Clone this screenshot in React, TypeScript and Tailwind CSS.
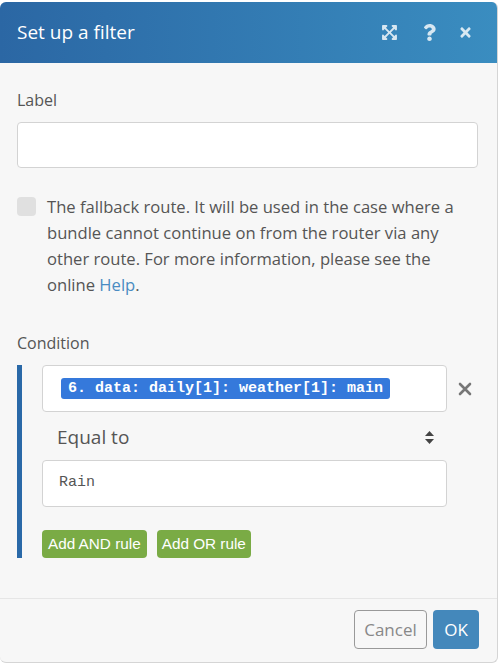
import { FaExpandArrowsAlt, FaQuestion, FaTimes } from "react-icons/fa";

const mono = { fontFamily: '"Liberation Mono", "Courier New", monospace' };

export default function App() {
  return (
    <div className="min-h-screen bg-white pt-[2px]" style={{ fontFamily: '"Open Sans", "Noto Sans", sans-serif' }}>
      <div className="w-[498px] h-[661px] flex flex-col rounded-[6px] overflow-hidden bg-[#f7f7f7] border-r border-b border-[#d5d5d5]">
        {/* header */}
        <div className="h-[61px] shrink-0 flex items-center justify-between pl-[17px] pr-[25px] bg-gradient-to-r from-[#2b67a4] to-[#3a8dc0]">
          <h1 className="text-[19px] text-white">Set up a filter</h1>
          <div className="flex items-center text-white/80">
            <FaExpandArrowsAlt className="w-[17px] h-[17px]" />
            <FaQuestion className="ml-[25px] w-[13px] h-[17px]" />
            <FaTimes className="ml-[23px] w-[13px] h-[15px]" />
          </div>
        </div>

        {/* body */}
        <div className="flex-1 px-[17px] pt-[25px] text-[#555]">
          <div className="text-[16px] leading-[24px]">Label</div>
          <div className="mt-[10px] mr-[2px] h-[46px] bg-white border border-[#d3d3d3] rounded-[4px]" />

          <div className="mt-[26px] flex gap-[11px] pr-[8px]">
            <div className="mt-[3px] w-[19px] h-[19px] shrink-0 rounded-[4px] bg-[#e0e0e0]" />
            <p className="text-[16.6px] leading-[26px] text-[#555]">
              The fallback route. It will be used in the case where a bundle cannot continue on from the router via any
              other route. For more information, please see the online <span className="text-[#4a8cc2]">Help</span>.
            </p>
          </div>

          <div className="mt-[33px] text-[16px] leading-[24px]">Condition</div>

          <div className="mt-[10px] border-l-[5px] border-[#2a69a8] pl-[20px]">
            <div className="flex items-center">
              <div className="w-[405px] h-[47px] bg-white border border-[#d3d3d3] rounded-[4px] flex items-center pl-[18px]">
                <span className="bg-[#3579db] text-white font-bold text-[15px] leading-[21px] px-[7px] rounded-[3px]" style={mono}>
                  6. data: daily[1]: weather[1]: main
                </span>
              </div>
              <svg className="ml-[11px]" width="14" height="14" viewBox="0 0 14 14" stroke="#777" strokeWidth="2.6" strokeLinecap="round">
                <path d="M2 2 L12 12 M12 2 L2 12" />
              </svg>
            </div>

            <div className="w-[405px] h-[48px] flex items-center justify-between pl-[15px] pr-[13px] pt-[3px]">
              <span className="text-[19px] text-[#555]">Equal to</span>
              <svg width="9" height="13" viewBox="0 0 9 13" fill="#444">
                <path d="M4.5 0 L9 5 H0 Z" />
                <path d="M0 8 H9 L4.5 13 Z" />
              </svg>
            </div>

            <div className="w-[405px] h-[47px] bg-white border border-[#d3d3d3] rounded-[4px] pl-[16px] pt-[11px] text-[15px] text-[#555]" style={mono}>
              Rain
            </div>

            <div className="mt-[23px] flex gap-[10px]" style={{ fontFamily: '"Liberation Sans", Arial, sans-serif' }}>
              <button className="h-[28px] px-[6px] rounded-[4px] bg-[#7aab45] text-white text-[15.3px]">Add AND rule</button>
              <button className="h-[28px] px-[5px] rounded-[4px] bg-[#7aab45] text-white text-[15.3px]">Add OR rule</button>
            </div>
          </div>
        </div>

        {/* footer */}
        <div className="h-[64px] shrink-0 border-t border-[#e6e6e6] flex items-center justify-end gap-[6px] pr-[18px] pb-[2px]">
          <button className="h-[39px] w-[73px] rounded-[4px] border border-[#999] text-[#888] text-[17px]">Cancel</button>
          <button className="h-[39px] w-[46px] rounded-[4px] bg-[#4488bb] text-white text-[17px]">OK</button>
        </div>
      </div>
    </div>
  );
}
